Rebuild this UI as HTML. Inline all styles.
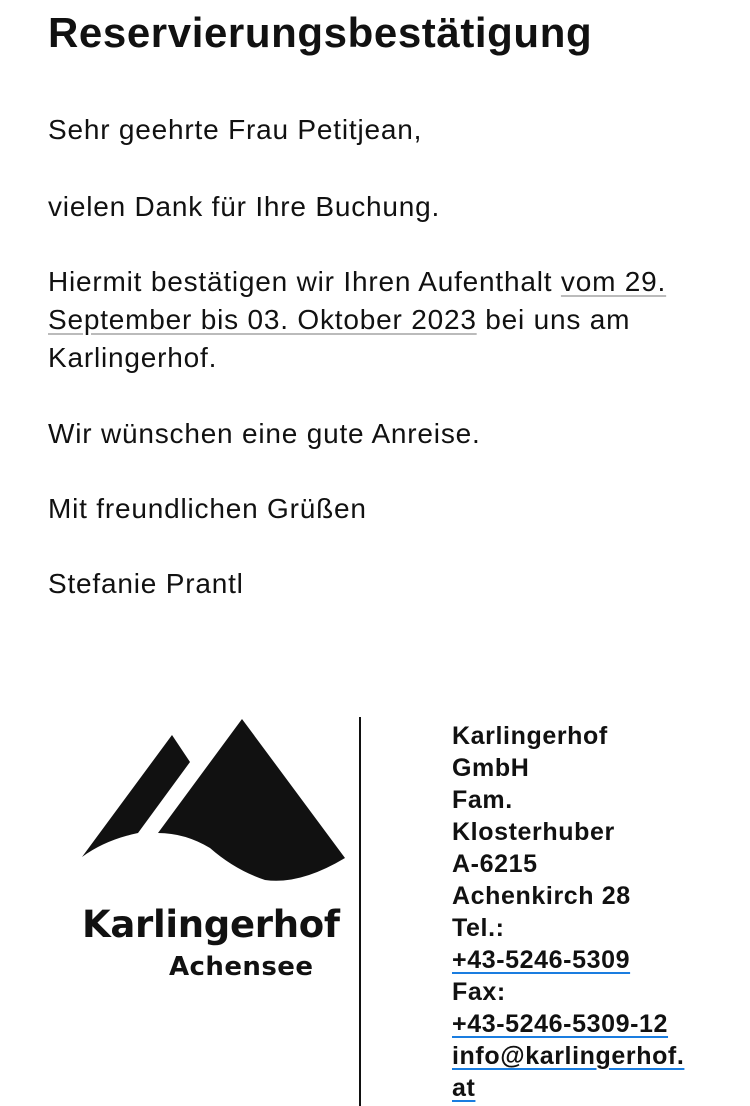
<!DOCTYPE html>
<html><head><meta charset="utf-8"><style>
body{margin:0;width:750px;height:1106px;overflow:hidden;background:#fff;font-family:"Liberation Sans",Arial,sans-serif;color:#111}
h1{position:absolute;left:48px;top:9px;margin:0;font-size:42px;font-weight:bold;letter-spacing:0.6px}
.t{position:absolute;left:48px;font-size:28px;line-height:38px;margin:0;letter-spacing:0.8px}
.u{text-decoration:underline;text-decoration-color:#bbb;text-underline-offset:4px}
.sig{position:absolute;left:452px;top:720px;font-size:25px;font-weight:bold;line-height:32px;letter-spacing:0.6px}
.sig a{color:#111;text-decoration:underline;text-decoration-color:#1a7de0;text-underline-offset:4px}
.vl{position:absolute;left:359px;top:717px;width:2px;height:389px;background:#111}
</style></head><body>
<h1>Reservierungsbestätigung</h1>
<p class="t" style="top:111px">Sehr geehrte Frau Petitjean,</p>
<p class="t" style="top:188px">vielen Dank für Ihre Buchung.</p>
<p class="t" style="top:263px">Hiermit bestätigen wir Ihren Aufenthalt <span class="u">vom 29.<br>September bis 03. Oktober 2023</span> bei uns am<br>Karlingerhof.</p>
<p class="t" style="top:415px">Wir wünschen eine gute Anreise.</p>
<p class="t" style="top:490px">Mit freundlichen Grüßen</p>
<p class="t" style="top:565px">Stefanie Prantl</p>
<svg style="position:absolute;left:0;top:0" width="750" height="1106">
<path d="M82,857 L172,735 L190,762 L138,833 Q105,840 82,857Z" fill="#111"/>
<path d="M158,833 L242,719 L345,858 Q300,885 265,880 Q235,870 210,848 Q185,833 158,833Z" fill="#111"/>
<text x="211" y="937" text-anchor="middle" font-family="DejaVu Sans,sans-serif" font-weight="bold" font-size="37" textLength="258" fill="#111">Karlingerhof</text>
<text x="241" y="975" text-anchor="middle" font-family="DejaVu Sans,sans-serif" font-weight="bold" font-size="26" textLength="144" fill="#111">Achensee</text>
</svg>
<div class="vl"></div>
<div class="sig">Karlingerhof<br>GmbH<br>Fam.<br>Klosterhuber<br>A-6215<br>Achenkirch 28<br>Tel.:<br><a>+43-5246-5309</a><br>Fax:<br><a>+43-5246-5309-12</a><br><a>info@karlingerhof.<br>at</a></div>
</body></html>
